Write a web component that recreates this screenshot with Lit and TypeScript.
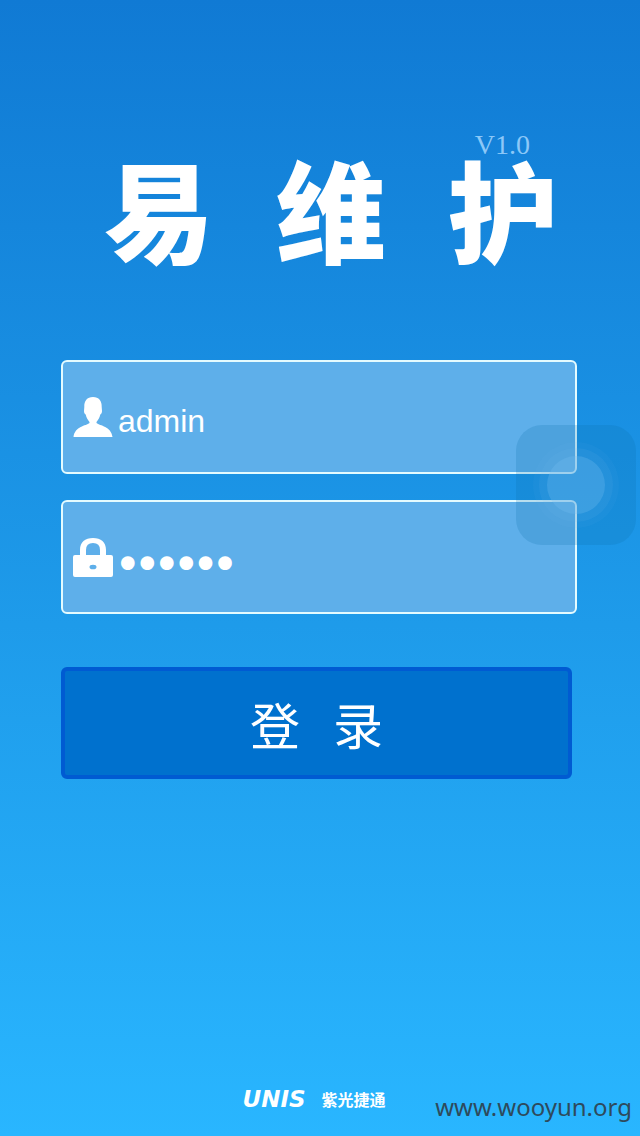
import { LitElement, html, css } from "lit";
import { customElement, state } from "lit/decorators.js";

@customElement("app-root")
export class AppRoot extends LitElement {
  static styles = css`
    :host {
      display: block;
      font-family: "Liberation Sans", "Noto Sans CJK SC", sans-serif;
      color: #fff;
    }
    .screen {
      position: relative;
      display: flex;
      flex-direction: column;
      box-sizing: border-box;
      min-height: 100vh;
      padding: 136px 63px 0 61px;
      overflow: hidden;
      background: linear-gradient(#107ad4, #1e9bea 55%, #29b6ff);
    }
    .version {
      margin: 0 47px 0 0;
      text-align: right;
      font: 28px/18px "Liberation Serif", serif;
      color: #8cc8f8;
    }
    .title {
      display: flex;
      justify-content: center;
      gap: 62px;
      margin: 0 0 0 24px;
      font: 900 110px/106px "Noto Sans CJK SC", sans-serif;
    }
    .form {
      display: flex;
      flex-direction: column;
      gap: 26px;
      margin-top: 100px;
    }
    .field {
      display: flex;
      align-items: center;
      box-sizing: border-box;
      height: 114px;
      padding: 0 10px;
      border: 2px solid #e4fbff;
      border-radius: 6px;
      background: #5eafea;
    }
    .icon {
      display: block;
      width: 40px;
      height: 40px;
      fill: #fff;
    }
    .input {
      flex: 1;
      min-width: 0;
      box-sizing: border-box;
      height: 60px;
      margin: 0;
      padding: 8px 5px 0;
      border: 0;
      outline: 0;
      background: none;
      color: #fff;
      font: 32px "Liberation Sans", sans-serif;
    }
    .secret {
      padding-top: 14px;
      font: 33px "DejaVu Sans", sans-serif;
      -webkit-text-stroke: 4px #fff;
    }
    .login {
      display: flex;
      justify-content: center;
      align-items: center;
      gap: 33px;
      height: 112px;
      margin: 27px 5px 0 0;
      padding: 0;
      border: 4px solid #005bd2;
      border-radius: 6px;
      background: #0071ce;
      color: #fff;
      font: 50px "Noto Sans CJK SC", sans-serif;
    }
    .footer {
      display: flex;
      justify-content: center;
      align-items: center;
      gap: 16px;
      margin: auto 10px 25px 0;
      line-height: 24px;
    }
    .brand {
      font: italic bold 23px/24px "DejaVu Sans", sans-serif;
    }
    .company {
      font: bold 16px/24px "Noto Sans CJK SC", sans-serif;
    }
    .site {
      position: absolute;
      right: 8px;
      bottom: 13px;
      font: 24px/32px "Noto Sans", "Open Sans", sans-serif;
      color: #2e4a5c;
      text-decoration: none;
    }
    .assist {
      position: absolute;
      top: 425px;
      right: 4px;
      width: 120px;
      height: 120px;
      padding: 0;
      border: 0;
      border-radius: 26px;
      background: rgba(10, 110, 170, 0.2);
    }
    .rings {
      display: block;
      width: 120px;
      height: 120px;
      fill: #78bef0;
    }
  `;

  @state() private user = "admin";
  @state() private password = "123456";

  render() {
    return html`
      <main class="screen">
        <p class="version">V1.0</p>
        <h1 class="title"><span>易</span><span>维</span><span>护</span></h1>
        <form class="form" @submit=${(e: Event) => e.preventDefault()}>
          <div class="field">
            <label for="user" aria-label="用户名">
              <svg class="icon" viewBox="0 0 40 40" aria-hidden="true">
                <path d="M20 0C14 0 11 4 11.300 10L11 14c0 2 .7 3 1.700 3.500.5 3 2 5 3.800 7.500V26C13 29 2 29 .5 40h39C38 29 27 29 23.500 26V25c1.800-2.500 3.300-4.500 3.800-7.500 1-.5 1.700-1.500 1.700-3.500l-.3-4C29 4 26 0 20 0Z" />
              </svg>
            </label>
            <input
              id="user"
              class="input"
              type="text"
              autocomplete="off"
              .value=${this.user}
              @input=${(e: Event) => (this.user = (e.target as HTMLInputElement).value)}
            />
          </div>
          <div class="field">
            <label for="password" aria-label="密码">
              <svg class="icon" viewBox="0 0 40 40" aria-hidden="true">
                <path fill-rule="evenodd" d="M7 18v-5C7 5 12 1 20 1s13 4 13 12v5h5q2 0 2 2v18q0 2-2 2H2q-2 0-2-2V20q0-2 2-2ZM13 18h14v-5q0-7-7-7t-7 7ZM16.500 30a3.500 2.300 0 1 0 7 0a3.500 2.300 0 1 0-7 0Z" />
              </svg>
            </label>
            <input
              id="password"
              class="input secret"
              type="password"
              autocomplete="off"
              .value=${this.password}
              @input=${(e: Event) => (this.password = (e.target as HTMLInputElement).value)}
            />
          </div>
          <button class="login" type="submit"><span>登</span><span>录</span></button>
        </form>
        <footer class="footer">
          <span class="brand">UNIS</span>
          <span class="company">紫光捷通</span>
        </footer>
        <a class="site" href="#">www.wooyun.org</a>
        <button class="assist" type="button" aria-label="AssistiveTouch">
          <svg class="rings" viewBox="0 0 120 120" aria-hidden="true">
            <circle cx="60" cy="60" r="43" opacity=".06" />
            <circle cx="60" cy="60" r="37" opacity=".1" />
            <circle cx="60" cy="60" r="29" opacity=".28" />
          </svg>
        </button>
      </main>
    `;
  }
}
